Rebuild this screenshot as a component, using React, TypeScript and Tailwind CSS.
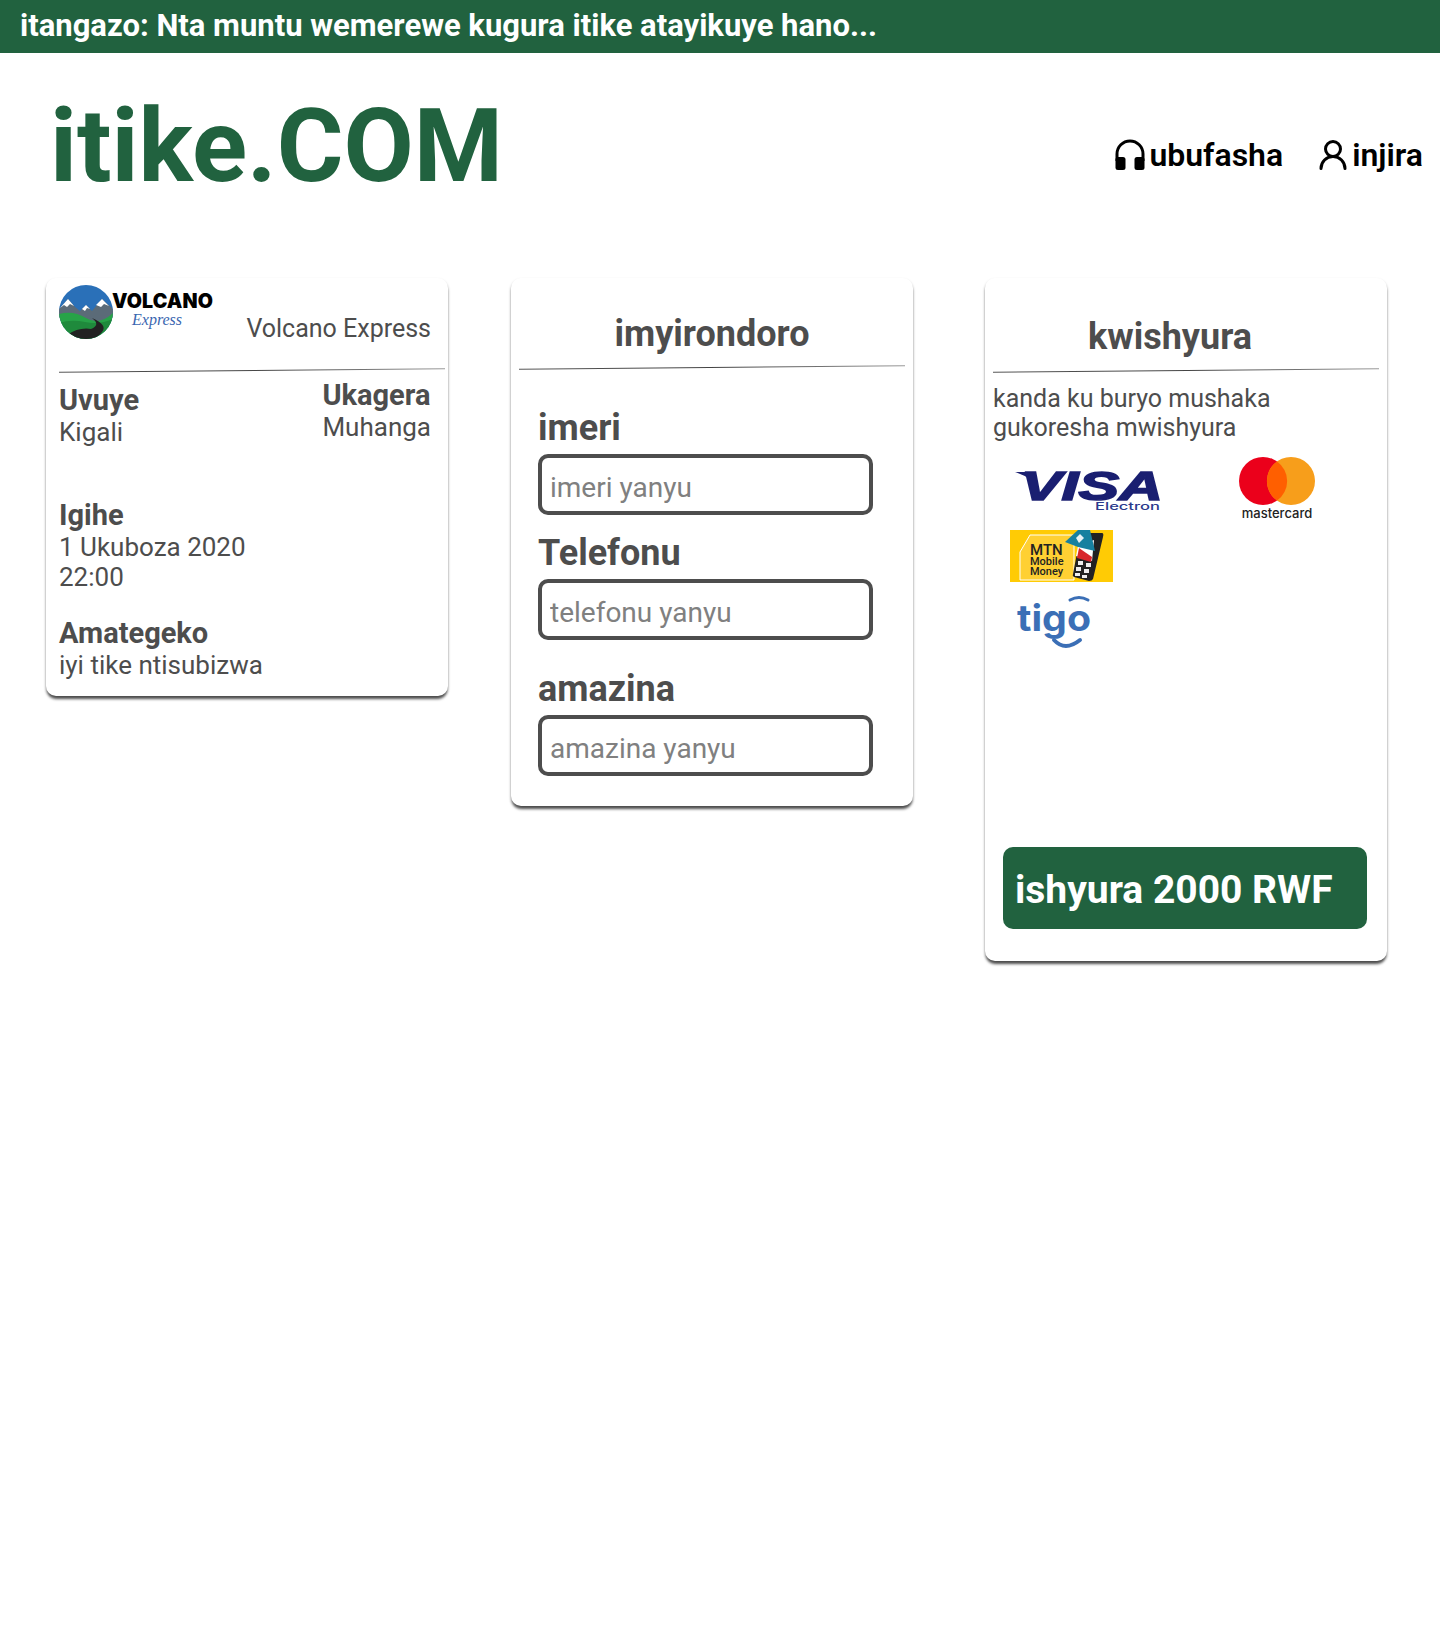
import React from 'react';
import { UserRound } from 'lucide-react';

const Divider = ({ className }: { className: string }) => (
  <div className={`h-px -rotate-[0.5deg] bg-gradient-to-r from-[#555] via-[#444] to-[#999] ${className}`} />
);

const VolcanoLogo = () => (
  <div className="flex items-start w-[156px] h-[56px]">
    <svg viewBox="0 0 54 54" className="w-[54px] h-[54px] shrink-0">
      <defs>
        <clipPath id="volcano-clip"><circle cx="27" cy="27" r="27" /></clipPath>
      </defs>
      <g clipPath="url(#volcano-clip)">
        <rect width="54" height="54" fill="#2a70b8" />
        <path d="M0 24 L9 14 L16 22 L21 26 L27 20 L33 26 L43 14 L54 24 V36 H0 Z" fill="#5b6b78" />
        <path d="M1 23 L9 14 L15 21 L11 19 L8 22 L5 20 Z M23 24 L27 20 L31 24 L28 23 L26 26 Z M37 20 L43 14 L50 21 L45 19 L42 22 Z" fill="#fff" />
        <path d="M0 29 Q14 25 27 33 T54 28 V54 H0 Z" fill="#27a348" />
        <path d="M0 38 Q12 34 26 37 T54 34 V54 H0 Z" fill="#1f8a3c" />
        <path d="M8 50 Q20 42 32 44 Q42 40 33 33 Q49 40 43 47 Q38 54 30 54 H10 Z" fill="#222" />
      </g>
    </svg>
    <div className="-ml-px mt-[5px] flex flex-col">
      <span className="font-['Inter',sans-serif] font-black text-[19.6px] leading-[22px] tracking-[0.1px] text-black">VOLCANO</span>
      <span className="ml-5 mt-[1px] font-['Liberation_Serif',serif] italic text-[16px] leading-[13px] text-[#3a66b0]">Express</span>
    </div>
  </div>
);

const VisaLogo = () => (
  <svg viewBox="0 0 150 44" className="w-[150px] h-[44px] overflow-visible">
    <path d="M0 2 H12 Q19 2 20 7 L24 20 Q18 8 0 2 Z" fill="#1a1f71" />
    <text x="6" y="30" fontFamily="Liberation Sans, sans-serif" fontWeight="700" fontStyle="italic" fontSize="41" textLength="142" lengthAdjust="spacingAndGlyphs" fill="#1a1f71" stroke="#1a1f71" strokeWidth="1.6">VISA</text>
    <text x="80" y="40" fontFamily="Inter, sans-serif" fontWeight="500" fontSize="11" textLength="65" lengthAdjust="spacingAndGlyphs" fill="#2b3a8c">Electron</text>
  </svg>
);

const MastercardLogo = () => (
  <div className="flex flex-col items-center w-[76px]">
    <svg viewBox="0 0 76 48" className="w-[76px] h-[48px]">
      <circle cx="24" cy="24" r="24" fill="#eb001b" />
      <circle cx="52" cy="24" r="24" fill="#f79e1b" />
      <path d="M38 4.4 A24 24 0 0 1 38 43.6 A24 24 0 0 1 38 4.4 Z" fill="#ff5f00" />
    </svg>
    <span className="mt-px font-['Inter',sans-serif] font-medium text-[13px] leading-[14px] text-[#222] whitespace-nowrap">mastercard</span>
  </div>
);

const MtnLogo = () => (
  <div className="relative w-[103px] h-[52px] bg-[#ffcb05] overflow-hidden">
    <svg viewBox="0 0 103 52" className="absolute inset-0 w-[103px] h-[52px]">
      <path d="M10 22 L20 5 H64 V50 H10 Z" fill="#ffd033" stroke="#fff" strokeWidth="1" />
      <path d="M68 18 L74 3 L92 3 Q94 3 93 7 L83 49 Q82 51 79 51 L64 47 Q62 46 63 44 Z" fill="#222" />
      <path d="M68 16 L84 10 L82 31 L66 26 Z" fill="#fff" />
      <path d="M69 18 L82 27 L81 32 L67 28 Z" fill="#d8262c" />
      <path d="M55 12 L68 0 L80 0 L85 21 L68 17 Z" fill="#17809f" />
      <path d="M66 8 L70 4 L74 8 L69 13 Z" fill="#e7f1f5" />
      <path d="M68 31 h5 v4 h-5 z M76 33 h5 v4 h-5 z M66 37 h5 v4 h-5 z M74 39 h5 v4 h-5 z M65 43 h5 v3 h-5 z M72 45 h5 v3 h-5 z" fill="#eee" />
    </svg>
    <div className="absolute left-[20px] top-[13px] flex flex-col font-['Roboto',sans-serif] text-[#222]">
      <span className="text-[15px] leading-[14px] font-medium">MTN</span>
      <span className="text-[11px] leading-[10px] font-medium">Mobile</span>
      <span className="text-[11px] leading-[10px] font-medium">Money</span>
    </div>
  </div>
);

const TigoLogo = () => (
  <svg viewBox="0 0 76 54" className="w-[76px] h-[54px] overflow-visible">
    <text x="0" y="35" fontFamily="Inter, sans-serif" fontWeight="700" fontSize="36" textLength="74" lengthAdjust="spacingAndGlyphs" fill="#3b6fb6">tigo</text>
    <path d="M53 4 Q62 -1 71 4" fill="none" stroke="#3b6fb6" strokeWidth="3" strokeLinecap="round" />
    <path d="M37 44 Q48 56 63 44" fill="none" stroke="#3b6fb6" strokeWidth="4" strokeLinecap="round" />
  </svg>
);

const Field = ({ label, placeholder, className }: { label: string; placeholder: string; className: string }) => (
  <div className={className}>
    <label className="block text-[36px] leading-[41px] font-bold">{label}</label>
    <div className="w-[335px] h-[61px] mt-[5px] border-[4px] border-[#4d4d4d] rounded-[10px] px-2 flex items-center">
      <input placeholder={placeholder} className="w-full text-[28px] leading-[32px] mt-[6px] outline-none placeholder:text-[#808080]" />
    </div>
  </div>
);

const cardClass = 'w-[402px] bg-white rounded-[10px] shadow-[0_4px_3px_-1px_rgba(0,0,0,0.6),0_2px_3px_rgba(0,0,0,0.3)] shrink-0';

export default function App() {
  return (
    <div className="min-h-[1626px] bg-white text-[#4d4d4d] font-['Roboto',sans-serif]">
      {/* Announcement */}
      <div className="h-[53px] bg-[#21623f] pl-5 flex items-center">
        <p className="text-[31px] font-bold text-white">itangazo: Nta muntu wemerewe kugura itike atayikuye hano...</p>
      </div>

      {/* Header */}
      <header className="h-[225px] flex items-start pr-[17px]">
        <h1 className="ml-[50px] mt-[33px] text-[102px] leading-[120px] font-bold text-[#21623f]">itike.COM</h1>
        <nav className="ml-auto mt-[82px] flex items-center text-black text-[32px] leading-[40px] font-semibold">
          <a className="flex items-center gap-[3px]">
            <svg viewBox="0 0 32 32" className="w-[32px] h-[32px]">
              <path d="M3 22 V15 a13 13 0 0 1 26 0 V22" fill="none" stroke="#000" strokeWidth="3" />
              <rect x="1.5" y="18" width="10" height="13" rx="2.5" fill="#000" />
              <rect x="20.5" y="18" width="10" height="13" rx="2.5" fill="#000" />
            </svg>
            ubufasha
          </a>
          <a className="flex items-center ml-[32px]">
            <UserRound className="w-[36px] h-[36px]" strokeWidth={2} />
            <span className="ml-px">injira</span>
          </a>
        </nav>
      </header>

      <main className="flex items-start pl-[46px]">
        {/* Ticket */}
        <section className={`${cardClass} px-[13px] h-[418px] text-[26px] leading-[30px]`}>
          <div className="flex justify-between h-[92px] pr-[4px] pt-[7px]">
            <VolcanoLogo />
            <span className="mt-[29px] text-[25px]">Volcano Express</span>
          </div>
          <Divider className="-mr-[1px] w-[386px]" />
          <div className="flex justify-between pr-[4px] mt-[8px] h-[120px]">
            <div className="mt-[5px]">
              <div className="text-[29px] leading-[33px] font-bold">Uvuye</div>
              <div>Kigali</div>
            </div>
            <div className="text-left">
              <div className="text-[29px] leading-[33px] font-bold">Ukagera</div>
              <div>Muhanga</div>
            </div>
          </div>
          <div className="text-[29px] leading-[33px] font-bold">Igihe</div>
          <div>1 Ukuboza 2020</div>
          <div>22:00</div>
          <div className="mt-[25px] text-[29px] leading-[33px] font-bold">Amategeko</div>
          <div>iyi tike ntisubizwa</div>
        </section>

        {/* Details */}
        <section className={`${cardClass} ml-[63px] h-[528px] px-[8px]`}>
          <h2 className="pt-[34px] h-[89px] text-center text-[36px] leading-[45px] font-bold">imyirondoro</h2>
          <Divider className="w-[386px]" />
          <div className="pl-[19px]">
            <Field className="mt-[40px]" label="imeri" placeholder="imeri yanyu" />
            <Field className="mt-[18px]" label="Telefonu" placeholder="telefonu yanyu" />
            <Field className="mt-[29px]" label="amazina" placeholder="amazina yanyu" />
          </div>
        </section>

        {/* Payment */}
        <section className={`${cardClass} ml-[72px] h-[683px] px-[8px]`}>
          <h2 className="pt-[37px] h-[92px] pr-[32px] text-center text-[36px] leading-[45px] font-bold">kwishyura</h2>
          <Divider className="w-[386px]" />
          <p className="mt-[13px] text-[25px] leading-[29px]">kanda ku buryo mushaka<br />gukoresha mwishyura</p>
          <div className="mt-[15px] ml-[22px] flex items-start gap-[74px] h-[73px]">
            <div className="mt-[13px]"><VisaLogo /></div>
            <MastercardLogo />
          </div>
          <div className="ml-[17px]"><MtnLogo /></div>
          <div className="mt-[14px] ml-[24px]"><TigoLogo /></div>
          <button className="mt-[197px] ml-[10px] w-[364px] h-[82px] bg-[#21623f] rounded-[10px] pl-3 pt-1 text-left text-white text-[39px] font-bold">ishyura 2000 RWF</button>
        </section>
      </main>
    </div>
  );
}
